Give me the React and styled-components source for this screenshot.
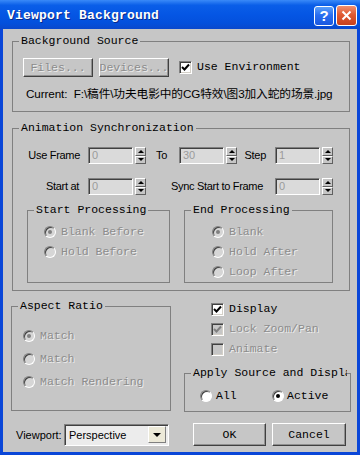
import React from "react";
import styled, { createGlobalStyle } from "styled-components";

const MONO = `"Liberation Mono", "Noto Sans CJK SC", monospace`;
const SANS = `"Liberation Sans", "Noto Sans CJK SC", sans-serif`;

const GlobalStyle = createGlobalStyle`
  html, body {
    margin: 0;
    padding: 0;
    background: #c6c6c6;
  }
  body {
    width: 360px;
    height: 455px;
    overflow: hidden;
  }
`;

const Window = styled.div`
  width: 360px;
  height: 455px;
  box-sizing: border-box;
  display: flex;
  flex-direction: column;
  background: #0a46d8;
`;

const TitleBar = styled.div`
  height: 29px;
  flex-shrink: 0;
  display: flex;
  align-items: center;
  padding: 2px 3px 0 7px;
  box-sizing: border-box;
  background: linear-gradient(180deg, #3a8af8 0%, #0a5ee8 18%, #0556e4 50%, #0450dc 80%, #0a48cc 100%);
`;

const Title = styled.span`
  font-family: ${MONO};
  font-weight: bold;
  font-size: 13px;
  letter-spacing: 0.2px;
  color: #fff;
  text-shadow: 1px 1px 0 #0a2a8a;
`;

const CaptionButton = styled.div`
  width: ${(p) => p.$size}px;
  height: ${(p) => p.$size}px;
  box-sizing: border-box;
  border: 1px solid #fff;
  border-radius: 3px;
  display: flex;
  align-items: center;
  justify-content: center;
  margin-left: ${(p) => p.$ml};
  background: ${(p) =>
    p.$close
      ? "linear-gradient(180deg, #f09070 0%, #e05a32 45%, #c8401c 100%)"
      : "linear-gradient(180deg, #5aa0fa 0%, #2a6ef0 45%, #1a58e0 100%)"};
  color: #fff;
  font-family: ${SANS};
  font-weight: bold;
  font-size: 15px;
`;

const Body = styled.div`
  flex: 1;
  margin: 0 3px 3px;
  background: #c6c6c6;
  display: flex;
  flex-direction: column;
  padding: 5px 0 0 9px;
`;

const Group = styled.fieldset`
  margin: ${(p) => p.$m || 0};
  padding: 0;
  min-width: 0;
  width: ${(p) => p.$w}px;
  box-sizing: border-box;
  border: 1px solid #808080;
  display: flex;
  flex-direction: column;
`;

const GroupInner = styled.div`
  display: flex;
  flex-direction: column;
  padding: ${(p) => p.$pad || 0};
`;

const Legend = styled.legend`
  font-family: ${MONO};
  font-size: 11.5px;
  line-height: 14px;
  color: #000;
  padding: 0 2px;
  margin-left: 6px;
  white-space: nowrap;
  overflow: hidden;
  max-width: ${(p) => (p.$max ? `${p.$max}px` : "none")};
`;

const Row = styled.div`
  display: flex;
  align-items: center;
  gap: ${(p) => p.$gap || 0}px;
  margin-top: ${(p) => p.$mt || 0}px;
  margin-left: ${(p) => p.$ml || 0}px;
`;

const Button = styled.div`
  width: ${(p) => p.$w}px;
  height: ${(p) => p.$h || 19}px;
  box-sizing: border-box;
  border: 1px solid;
  border-color: #fff #404040 #404040 #fff;
  box-shadow: inset -1px -1px 0 #909090;
  display: flex;
  align-items: center;
  justify-content: center;
  overflow: hidden;
  white-space: nowrap;
  font-family: ${MONO};
  font-size: 11.5px;
  color: ${(p) => (p.$disabled ? "#8c8c8c" : "#000")};
  text-shadow: ${(p) => (p.$disabled ? "1px 1px 0 #ececec" : "none")};
  margin-left: ${(p) => p.$ml || 0}px;
`;

const Text = styled.span`
  font-family: ${MONO};
  font-size: 11.5px;
  line-height: 14px;
  white-space: nowrap;
  color: ${(p) => (p.$disabled ? "#8c8c8c" : "#000")};
  text-shadow: ${(p) => (p.$disabled ? "1px 1px 0 #ececec" : "none")};
`;

const CurrentLine = styled.div`
  font-family: ${SANS};
  font-size: 11.7px;
  letter-spacing: -0.1px;
  line-height: 14px;
  color: #000;
  white-space: nowrap;
  margin: 10px 0 0 13px;
`;

const Box = styled.div`
  width: 13px;
  height: 13px;
  box-sizing: border-box;
  flex-shrink: 0;
  border: 1px solid;
  border-color: #808080 #fff #fff #808080;
  box-shadow: inset 1px 1px 0 #404040, inset -1px -1px 0 #d4d0c8;
  background: ${(p) => (p.$disabled ? "#c6c6c6" : "#fff")};
  display: flex;
  align-items: center;
  justify-content: center;
`;

const Circle = styled.div`
  width: 12px;
  height: 12px;
  box-sizing: border-box;
  flex-shrink: 0;
  border-radius: 50%;
  border: 1px solid;
  border-color: #808080 #fff #fff #808080;
  box-shadow: inset 1px 1px 0 #404040;
  background: ${(p) => (p.$disabled ? "#d6d6d6" : "#fff")};
  display: flex;
  align-items: center;
  justify-content: center;
`;

const Dot = styled.div`
  width: 4px;
  height: 4px;
  border-radius: 50%;
  background: ${(p) => (p.$disabled ? "#808080" : "#000")};
`;

const Option = styled.div`
  display: flex;
  align-items: center;
  gap: ${(p) => p.$gap || 5}px;
  height: ${(p) => p.$h || 20}px;
  width: ${(p) => (p.$w ? `${p.$w}px` : "auto")};
  flex-shrink: 0;
`;

const SpinGrid = styled.div`
  display: grid;
  grid-template-columns: 75px 58px 33px 58px 38px 58px;
  grid-auto-rows: 17px;
  row-gap: 14px;
  padding-top: 12px;
`;

const FieldLabel = styled.div`
  font-family: ${SANS};
  font-size: 11px;
  letter-spacing: -0.3px;
  line-height: 17px;
  text-align: right;
  white-space: nowrap;
  padding-right: ${(p) => p.$pr}px;
  grid-column: ${(p) => p.$col || "auto"};
`;

const Spinner = styled.div`
  display: flex;
  gap: 2px;
`;

const SpinField = styled.div`
  width: 45px;
  height: 17px;
  box-sizing: border-box;
  border: 1px solid;
  border-color: #808080 #fff #fff #808080;
  box-shadow: inset 1px 1px 0 #404040;
  background: #dadada;
  font-family: ${SANS};
  font-size: 11px;
  line-height: 15px;
  padding-left: 3px;
  color: #9a9a9a;
`;

const SpinArrows = styled.div`
  width: 11px;
  height: 17px;
  display: flex;
  flex-direction: column;
`;

const ArrowHalf = styled.div`
  flex: 1;
  box-sizing: border-box;
  border: 1px solid;
  border-color: #fff #606060 #606060 #fff;
  background: #c6c6c6;
  display: flex;
  align-items: center;
  justify-content: center;
`;

const Tri = styled.div`
  width: 0;
  height: 0;
  border-left: 3px solid transparent;
  border-right: 3px solid transparent;
  ${(p) => (p.$up ? "border-bottom: 3px solid #000;" : "border-top: 3px solid #000;")}
`;

const ProcessRow = styled.div`
  display: flex;
  align-items: stretch;
  gap: 14px;
  margin: 8px 0 7px 14px;
`;

const LowerRow = styled.div`
  display: flex;
  align-items: flex-start;
  margin-top: 8px;
`;

const RightColumn = styled.div`
  display: flex;
  flex-direction: column;
  width: 167px;
  margin-left: 13px;
`;

const BottomRow = styled.div`
  display: flex;
  align-items: center;
  height: 23px;
  margin-top: 11px;
`;

const ViewportLabel = styled.div`
  font-family: ${SANS};
  font-size: 11px;
  width: 48px;
  margin-left: 4px;
`;

const Dropdown = styled.div`
  width: 105px;
  height: 22px;
  box-sizing: border-box;
  border: 1px solid;
  border-color: #808080 #fff #fff #808080;
  box-shadow: inset 1px 1px 0 #404040;
  background: #ececec;
  display: flex;
  align-items: center;
  padding: 0 2px 0 4px;
  font-family: ${SANS};
  font-size: 11px;
`;

const DropButton = styled.div`
  margin-left: auto;
  width: 18px;
  height: 17px;
  box-sizing: border-box;
  border: 1px solid;
  border-color: #fff #808080 #808080 #fff;
  background: #ece9d8;
  display: flex;
  align-items: center;
  justify-content: center;
`;

const DropTri = styled.div`
  width: 0;
  height: 0;
  border-left: 4px solid transparent;
  border-right: 4px solid transparent;
  border-top: 4px solid #000;
`;

const Check = ({ disabled }) => (
  <svg width="9" height="9" viewBox="0 0 9 9">
    <path
      d="M1 4 L3.5 6.5 L8 1.5"
      fill="none"
      stroke={disabled ? "#808080" : "#000"}
      strokeWidth="2"
    />
  </svg>
);

const CheckOption = ({ label, checked, disabled }) => (
  <Option>
    <Box $disabled={disabled}>{checked && <Check disabled={disabled} />}</Box>
    <Text $disabled={disabled}>{label}</Text>
  </Option>
);

const RadioOption = ({ label, checked, disabled, h, w, gap }) => (
  <Option $h={h} $w={w} $gap={gap}>
    <Circle $disabled={disabled}>{checked && <Dot $disabled={disabled} />}</Circle>
    <Text $disabled={disabled}>{label}</Text>
  </Option>
);

const Spin = ({ value }) => (
  <Spinner>
    <SpinField>{value}</SpinField>
    <SpinArrows>
      <ArrowHalf>
        <Tri $up />
      </ArrowHalf>
      <ArrowHalf>
        <Tri />
      </ArrowHalf>
    </SpinArrows>
  </Spinner>
);

export default function App() {
  return (
    <>
      <GlobalStyle />
      <Window>
        <TitleBar>
          <Title>Viewport Background</Title>
          <CaptionButton $size={20} $ml="auto">?</CaptionButton>
          <CaptionButton $size={21} $ml="2px" $close>
            <svg width="11" height="11" viewBox="0 0 11 11">
              <path d="M1.5 1.5 L9.5 9.5 M9.5 1.5 L1.5 9.5" stroke="#fff" strokeWidth="2" />
            </svg>
          </CaptionButton>
        </TitleBar>
        <Body>
          <Group $w={338}>
            <Legend>Background Source</Legend>
            <GroupInner $pad="0 0 10px 0">
              <Row $mt={9} $ml={10} $gap={6}>
                <Button $w={70} $disabled>Files...</Button>
                <Button $w={70} $disabled>Devices...</Button>
                <Row $ml={4}>
                  <CheckOption label="Use Environment" checked />
                </Row>
              </Row>
              <CurrentLine>Current:&nbsp; F:\稿件\功夫电影中的CG特效\图3加入蛇的场景.jpg</CurrentLine>
            </GroupInner>
          </Group>

          <Group $w={338} $m="9px 0 0 0">
            <Legend>Animation Synchronization</Legend>
            <SpinGrid>
              <FieldLabel $pr={8}>Use Frame</FieldLabel>
              <Spin value="0" />
              <FieldLabel $pr={12}>To</FieldLabel>
              <Spin value="30" />
              <FieldLabel $pr={9}>Step</FieldLabel>
              <Spin value="1" />
              <FieldLabel $pr={9}>Start at</FieldLabel>
              <Spin value="0" />
              <FieldLabel $pr={12} $col="3 / span 3">Sync Start to Frame</FieldLabel>
              <Spin value="0" />
            </SpinGrid>
            <ProcessRow>
              <Group $w={143}>
                <Legend>Start Processing</Legend>
                <GroupInner $pad="5px 0 0 16px">
                  <RadioOption label="Blank Before" checked disabled />
                  <RadioOption label="Hold Before" disabled />
                </GroupInner>
              </Group>
              <Group $w={149}>
                <Legend>End Processing</Legend>
                <GroupInner $pad="5px 0 0 27px">
                  <RadioOption label="Blank" checked disabled />
                  <RadioOption label="Hold After" disabled />
                  <RadioOption label="Loop After" disabled />
                </GroupInner>
              </Group>
            </ProcessRow>
          </Group>

          <LowerRow>
            <Group $w={160} $m="0 0 0 -1px">
              <Legend>Aspect Ratio</Legend>
              <GroupInner $pad="11px 0 17px 11px">
                <RadioOption label="Match" checked disabled h={23} />
                <RadioOption label="Match" disabled h={23} />
                <RadioOption label="Match Rendering" disabled h={23} />
              </GroupInner>
            </Group>
            <RightColumn>
              <Row $ml={27}>
                <CheckOption label="Display" checked />
              </Row>
              <Row $ml={27}>
                <CheckOption label="Lock Zoom/Pan" checked disabled />
              </Row>
              <Row $ml={27}>
                <CheckOption label="Animate" disabled />
              </Row>
              <Group $w={167} $m="7px 0 0 0">
                <Legend $max={152}>Apply Source and Display to</Legend>
                <GroupInner $pad="9px 0 8px 15px">
                  <Row>
                    <RadioOption label="All" h={14} w={72} gap={4} />
                    <RadioOption label="Active" checked h={14} gap={3} />
                  </Row>
                </GroupInner>
              </Group>
            </RightColumn>
          </LowerRow>

          <BottomRow>
            <ViewportLabel>Viewport:</ViewportLabel>
            <Dropdown>
              Perspective
              <DropButton>
                <DropTri />
              </DropButton>
            </Dropdown>
            <Button $w={73} $h={23} $ml={24}>OK</Button>
            <Button $w={74} $h={23} $ml={6}>Cancel</Button>
          </BottomRow>
        </Body>
      </Window>
    </>
  );
}
